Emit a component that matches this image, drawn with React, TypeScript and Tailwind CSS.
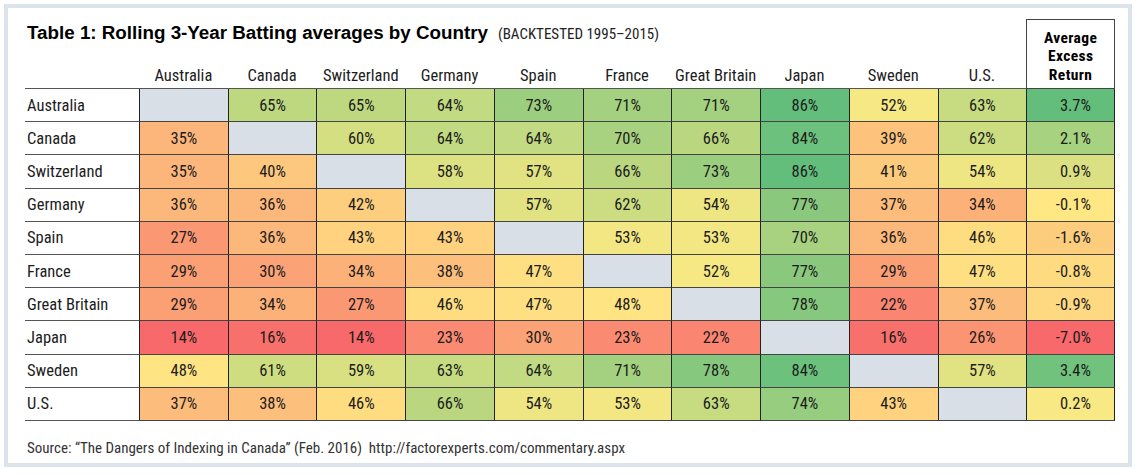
const countries = ['Australia', 'Canada', 'Switzerland', 'Germany', 'Spain', 'France', 'Great Britain', 'Japan', 'Sweden', 'U.S.']

// null = same country (blank grey cell)
const rows: { name: string; values: (number | null)[]; excess: number }[] = [
  { name: 'Australia', values: [null, 65, 65, 64, 73, 71, 71, 86, 52, 63], excess: 3.7 },
  { name: 'Canada', values: [35, null, 60, 64, 64, 70, 66, 84, 39, 62], excess: 2.1 },
  { name: 'Switzerland', values: [35, 40, null, 58, 57, 66, 73, 86, 41, 54], excess: 0.9 },
  { name: 'Germany', values: [36, 36, 42, null, 57, 62, 54, 77, 37, 34], excess: -0.1 },
  { name: 'Spain', values: [27, 36, 43, 43, null, 53, 53, 70, 36, 46], excess: -1.6 },
  { name: 'France', values: [29, 30, 34, 38, 47, null, 52, 77, 29, 47], excess: -0.8 },
  { name: 'Great Britain', values: [29, 34, 27, 46, 47, 48, null, 78, 22, 37], excess: -0.9 },
  { name: 'Japan', values: [14, 16, 14, 23, 30, 23, 22, null, 16, 26], excess: -7.0 },
  { name: 'Sweden', values: [48, 61, 59, 63, 64, 71, 78, 84, null, 57], excess: 3.4 },
  { name: 'U.S.', values: [37, 38, 46, 66, 54, 53, 63, 74, 43, null], excess: 0.2 },
]

const RED = [248, 105, 107]
const YELLOW = [255, 235, 132]
const GREEN = [99, 190, 123]

// excel style 3-colour scale
function scale(v: number, min: number, mid: number, max: number) {
  let a = RED
  let b = YELLOW
  let t = 0
  if (v <= mid) {
    t = (v - min) / (mid - min)
  } else {
    a = YELLOW
    b = GREEN
    t = (v - mid) / (max - mid)
  }
  t = Math.max(0, Math.min(1, t))
  const c = a.map((x, i) => Math.round(x + (b[i] - x) * t))
  return `rgb(${c[0]}, ${c[1]}, ${c[2]})`
}

const cond = "font-['Roboto_Condensed','Liberation_Sans',sans-serif]"

export default function App() {
  return (
    <div className="h-[475px] w-[1141px] bg-white">
      <div className="m-[4px] h-[463px] w-[1128px] border-4 border-[#dde3ea] bg-white pl-[17px] pt-[11px]">
        <div className="grid w-[1090px] grid-cols-[114px_repeat(11,minmax(0,1fr))] grid-rows-[44px_26px] text-[#1c1c1c]">
          <div className="col-span-11 flex items-baseline pl-[2px] pt-[3px]">
            <span className="font-['Liberation_Sans',sans-serif] text-[18.8px] font-bold leading-[22px] text-black">
              Table 1: Rolling 3-Year Batting averages by Country
            </span>
            <span className={`${cond} ml-[10px] text-[15px] text-[#222]`}>(BACKTESTED 1995–2015)</span>
          </div>
          <div
            className={`${cond} row-span-2 flex flex-col items-center justify-end border border-[#444] bg-white pb-[4px] text-center text-[15.5px] font-bold leading-[18.5px] tracking-[0.4px] text-black`}
          >
            <span>Average</span>
            <span>Excess</span>
            <span>Return</span>
          </div>
          <div className="border-b border-[#555]" />
          {countries.map((c) => (
            <div key={c} className={`${cond} flex items-center justify-center border-b border-[#555] pt-[2px] text-[16.5px]`}>
              {c}
            </div>
          ))}
        </div>

        <div className={`${cond} grid w-[1090px] grid-cols-[114px_repeat(11,minmax(0,1fr))] text-[16.5px] text-[#1c1c1c]`}>
          {rows.map((r) => (
            <div key={r.name} className="contents">
              <div className="flex h-[33.2px] items-center border-b border-[#555] pl-[2px] pt-[2px]">{r.name}</div>
              {r.values.map((v, i) => (
                <div
                  key={i}
                  className="flex h-[33.2px] items-center justify-center border-b border-l border-b-[#444] border-l-[#222] pt-[2px]"
                  style={{ backgroundColor: v === null ? '#d9dfe7' : scale(v, 14, 50, 86) }}
                >
                  {v === null ? '' : `${v}%`}
                </div>
              ))}
              <div
                className="flex h-[33.2px] items-center justify-end border-x border-b border-b-[#444] border-x-[#222] pr-[23px] pt-[2px]"
                style={{ backgroundColor: scale(r.excess, -7, 0.05, 3.7) }}
              >
                {r.excess.toFixed(1)}%
              </div>
            </div>
          ))}
        </div>

        <div className={`${cond} mt-[17px] pl-[2px] text-[15px] leading-[20px] text-[#333]`}>
          Source: “The Dangers of Indexing in Canada” (Feb. 2016)&nbsp; http://factorexperts.com/commentary.aspx
        </div>
      </div>
    </div>
  )
}
